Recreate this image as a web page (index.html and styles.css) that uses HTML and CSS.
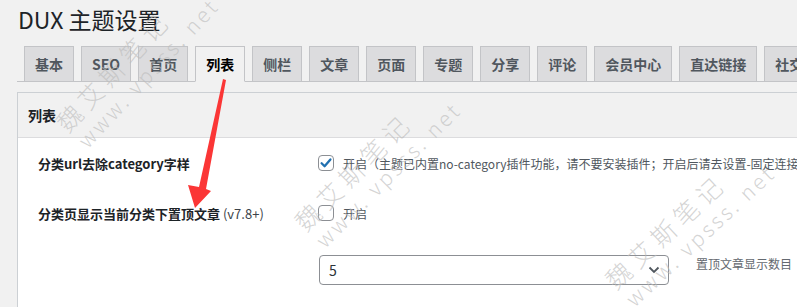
FILE: index.html
```html
<!DOCTYPE html>
<html lang="zh-CN">
<head>
    <meta charset="UTF-8">
    <meta name="viewport" content="width=device-width, initial-scale=1.0">
    <title>DUX 主题设置</title>
    <link rel="stylesheet" href="styles.css">
</head>
<body>
    <div class="wrap">
        <h1>DUX 主题设置</h1>

        <nav class="tabs">
            <a class="tab">基本</a>
            <a class="tab">SEO</a>
            <a class="tab">首页</a>
            <a class="tab active">列表</a>
            <a class="tab">侧栏</a>
            <a class="tab">文章</a>
            <a class="tab">页面</a>
            <a class="tab">专题</a>
            <a class="tab">分享</a>
            <a class="tab">评论</a>
            <a class="tab">会员中心</a>
            <a class="tab">直达链接</a>
            <a class="tab">社交</a>
        </nav>

        <div class="panel">
            <h3 class="panel-title">列表</h3>
            <div class="panel-body">
                <div class="row">
                    <div class="label">分类url去除category字样</div>
                    <div class="field">
                        <span class="check">
                            <svg width="14" height="14" viewBox="0 0 14 14"><path d="M2.6 7.2 L5.6 10.2 L11.4 3.4" fill="none" stroke="#2271b1" stroke-width="2.3" stroke-linecap="round" stroke-linejoin="round"/></svg>
                        </span>
                        <span>开启（主题已内置no-category插件功能，请不要安装插件；开启后请去设置-固定连接中点击保存）</span>
                    </div>
                </div>
                <div class="row">
                    <div class="label">分类页显示当前分类下置顶文章 <span class="ver">(v7.8+)</span></div>
                    <div class="field">
                        <span class="check"></span>
                        <span>开启</span>
                    </div>
                </div>
                <div class="row select-row">
                    <div class="field">
                        <div class="select">
                            <span>5</span>
                            <svg width="12" height="8" viewBox="0 0 12 8"><path d="M1.5 1.5 L6 6 L10.5 1.5" fill="none" stroke="#50575e" stroke-width="1.8"/></svg>
                        </div>
                        <span class="desc">置顶文章显示数目</span>
                    </div>
                </div>
            </div>
        </div>
    </div>

    <!-- 水印和标注箭头 -->
    <svg class="overlay" width="797" height="307" viewBox="0 0 797 307">
        <g class="mark" transform="translate(68 134) rotate(-47)">
            <text x="0" y="0" font-size="25" textLength="148" lengthAdjust="spacing">魏艾斯笔记</text>
            <text x="2" y="25" font-size="21" textLength="192" lengthAdjust="spacing">www. vpsss. net</text>
        </g>
        <g class="mark" transform="translate(306 233) rotate(-45)">
            <text x="0" y="0" font-size="25" textLength="148" lengthAdjust="spacing">魏艾斯笔记</text>
            <text x="2" y="25" font-size="21" textLength="192" lengthAdjust="spacing">www. vpsss. net</text>
        </g>
        <g class="mark" transform="translate(616 291) rotate(-43)">
            <text x="0" y="0" font-size="25" textLength="148" lengthAdjust="spacing">魏艾斯笔记</text>
            <text x="2" y="25" font-size="21" textLength="192" lengthAdjust="spacing">www. vpsss. net</text>
        </g>
        <polygon points="223,79 226,80 206,189 211,191 195,208 188,185 199,187" fill="#fb3636"/>
    </svg>
</body>
</html>
```

FILE: styles.css
```css
body {
    margin: 0;
    background: #f1f1f1;
    font-family: "Noto Sans CJK SC", "Noto Sans", sans-serif;
    color: #1d2327;
    overflow: hidden;
}
.wrap {
    width: 1100px;
    padding: 4px 0 0 17px;
}
h1 {
    font-size: 23px;
    font-weight: 400;
    line-height: 30px;
    margin: 0 0 12px 1px;
}
.tabs {
    display: flex;
    border-bottom: 1px solid #c3c4c7;
}
.tab {
    margin: 0 0 -1px 7px;
    padding: 5px 10px;
    font-size: 14px;
    line-height: 24px;
    font-weight: 600;
    border: 1px solid #c3c4c7;
    background: #dcdcde;
    color: #50575e;
    white-space: nowrap;
}
.tab.active {
    background: #f1f1f1;
    border-bottom-color: #f1f1f1;
    color: #000;
}
.panel {
    margin-top: 10px;
    border: 1px solid #ccd0d4;
    background: #fff;
}
.panel-title {
    margin: 0;
    height: 44px;
    line-height: 44px;
    padding-left: 10px;
    font-size: 14px;
    font-weight: 600;
    background: #f1f1f1;
    border-bottom: 1px solid #dcdcde;
}
.panel-body {
    padding-left: 20px;
}
.row {
    display: flex;
    align-items: center;
    height: 50px;
}
.label {
    width: 280px;
    flex-shrink: 0;
    font-size: 13px;
    font-weight: 600;
}
.label .ver {
    font-weight: 400;
    color: #3c434a;
}
.field {
    display: flex;
    align-items: center;
    gap: 9px;
    font-size: 12px;
    color: #50575e;
    white-space: nowrap;
}
.check {
    width: 16px;
    height: 16px;
    box-sizing: border-box;
    border: 1px solid #8c8f94;
    border-radius: 4px;
    background: #fff;
    display: flex;
    align-items: center;
    justify-content: center;
}
.select-row {
    height: auto;
    padding: 17px 0 22px;
}
.select-row .field {
    margin-left: 281px;
    gap: 27px;
    align-items: flex-start;
}
.select {
    width: 350px;
    height: 30px;
    box-sizing: border-box;
    border: 1px solid #8c8f94;
    border-radius: 4px;
    display: flex;
    align-items: center;
    justify-content: space-between;
    padding: 0 8px 0 9px;
    font-size: 14px;
    color: #2c3338;
}
.desc {
    font-size: 12px;
    line-height: 18px;
    color: #646970;
}
.overlay {
    position: absolute;
    top: 0;
    left: 0;
    pointer-events: none;
}
.mark text {
    font-family: "Noto Sans CJK SC", "Noto Sans", sans-serif;
    font-weight: 300;
    fill: #bdbdbd;
    fill-opacity: 0.65;
}
```
